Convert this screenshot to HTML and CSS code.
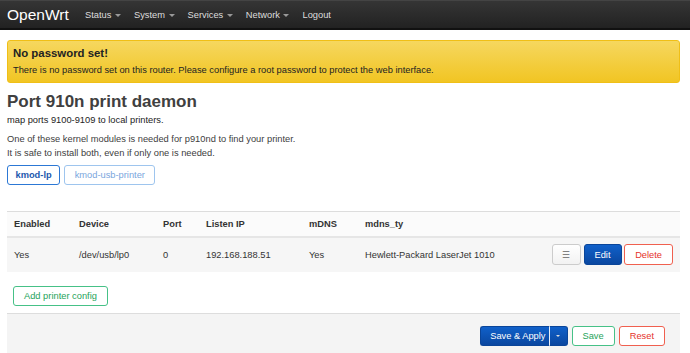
FILE: index.html
```html
<!DOCTYPE html>
<html>
<head>
	<title>p910nd - OpenWrt</title>
	<link rel="stylesheet" href="styles.css">
</head>
<body>
	<header class="navbar">
		<a class="brand" href="#">OpenWrt</a>
		<ul class="nav">
			<li>Status <span class="caret"></span></li>
			<li>System <span class="caret"></span></li>
			<li>Services <span class="caret"></span></li>
			<li>Network <span class="caret"></span></li>
			<li>Logout</li>
		</ul>
	</header>

	<div class="container">
		<div class="alert">
			<h4>No password set!</h4>
			<p>There is no password set on this router. Please configure a root password to protect the web interface.</p>
		</div>

		<h2 class="title">Port 910n print daemon</h2>
		<p class="desc">map ports 9100-9109 to local printers.</p>
		<p class="info">One of these kernel modules is needed for p910nd to find your printer.<br>It is safe to install both, even if only one is needed.</p>
		<div class="modules">
			<button class="btn btn-module">kmod-lp</button>
			<button class="btn btn-module disabled">kmod-usb-printer</button>
		</div>

		<table class="table">
			<tr class="head">
				<th class="c-en">Enabled</th>
				<th class="c-dev">Device</th>
				<th class="c-port">Port</th>
				<th class="c-ip">Listen IP</th>
				<th class="c-mdns">mDNS</th>
				<th>mdns_ty</th>
				<th></th>
			</tr>
			<tr class="row">
				<td>Yes</td>
				<td>/dev/usb/lp0</td>
				<td>0</td>
				<td>192.168.188.51</td>
				<td>Yes</td>
				<td>Hewlett-Packard LaserJet 1010</td>
				<td class="actions">
					<button class="btn btn-drag">&#9776;</button>
					<button class="btn btn-primary">Edit</button>
					<button class="btn btn-negative">Delete</button>
				</td>
			</tr>
		</table>

		<div class="add">
			<button class="btn btn-add">Add printer config</button>
		</div>

		<div class="page-actions">
			<div class="split">
				<button class="btn btn-primary btn-apply">Save &amp; Apply</button>
				<button class="btn btn-primary btn-dd"><span class="caret"></span></button>
			</div>
			<button class="btn btn-add">Save</button>
			<button class="btn btn-negative">Reset</button>
		</div>
	</div>
</body>
</html>
```

FILE: styles.css
```css
* {
  box-sizing: border-box;
  margin: 0;
  padding: 0;
}

body {
  font-family: "Liberation Sans", Arial, sans-serif;
  font-size: 9.3px;
  line-height: 14px;
  color: #404040;
  background: #fff;
}

.navbar {
  height: 30px;
  display: flex;
  align-items: center;
  background: linear-gradient(#353535, #222);
  border-top: 1px solid #444;
  border-bottom: 2px solid #111;
}

.brand {
  display: block;
  color: #fff;
  text-decoration: none;
  font-size: 15.5px;
  padding-left: 7px;
  width: 85px;
}

.nav {
  list-style: none;
  display: flex;
}

.nav li {
  color: #ddd;
  font-size: 9.3px;
  margin-right: 13px;
}

.caret {
  display: inline-block;
  width: 0;
  height: 0;
  vertical-align: middle;
  border-top: 3px solid #999;
  border-left: 3px solid transparent;
  border-right: 3px solid transparent;
  margin-left: 1px;
}

.container {
  padding: 0 10px 0 7px;
}

.alert {
  margin-top: 10px;
  height: 43px;
  padding: 5px 5px;
  background: linear-gradient(#f6d75f, #f1c523);
  border: 1px solid #f0bf16;
  border-radius: 3px;
  color: #222;
}

.alert h4 {
  font-size: 11.4px;
  line-height: 15px;
  margin-bottom: 2px;
}

.title {
  font-size: 17px;
  line-height: 22px;
  margin-top: 8px;
  color: #404040;
}

.desc {
  margin-top: 0;
  color: #222;
}

.info {
  margin-top: 5px;
}

.modules {
  margin-top: 5px;
  display: flex;
  gap: 4px;
}

.btn {
  font-family: inherit;
  font-size: 9.3px;
  height: 20px;
  padding: 0 10px;
  background: #fff;
  border: 1px solid #ccc;
  border-radius: 3px;
  color: #404040;
}

.btn-module {
  border-color: #2c78d5;
  color: #1c58ad;
  font-weight: bold;
  padding: 0 7.5px;
}

.btn-module.disabled {
  border-color: #9ec5ee;
  color: #7aa6dd;
  font-weight: normal;
  padding: 0 9.5px;
}

.table {
  width: 100%;
  margin-top: 26px;
  border-collapse: collapse;
  border-top: 1px solid #ddd;
}

.table th {
  text-align: left;
  padding: 0 7px;
  height: 25px;
  color: #333;
  background: #fbfbfb;
  border-bottom: 2px solid #e6e6e6;
}

.table td {
  padding: 0 7px;
  height: 35px;
  background: #f6f6f6;
  color: #333;
}

.c-en { width: 65px; }
.c-dev { width: 84px; }
.c-port { width: 43px; }
.c-ip { width: 103px; }
.c-mdns { width: 56px; }

.actions {
  text-align: right;
  white-space: nowrap;
}

.actions .btn {
  height: 21px;
}

.btn-drag {
  width: 29px;
  padding: 0;
  color: #666;
  background: linear-gradient(#fff, #f2f2f2);
}

.btn-primary {
  background: linear-gradient(#1060c9, #0a47a0);
  border-color: #0a4599;
  color: #fff;
}

.btn-negative {
  border-color: #f0604f;
  color: #e5322b;
}

.btn-add {
  border-color: #46c187;
  color: #26a35a;
}

.add {
  margin-top: 14px;
  padding-left: 6px;
}

.page-actions {
  margin-top: 7px;
  height: 45px;
  background: #f4f4f4;
  border-top: 1px solid #ddd;
  display: flex;
  justify-content: flex-end;
  align-items: flex-start;
  gap: 4px;
  padding-right: 15px;
  padding-top: 12px;
}

.split {
  display: flex;
}

.btn-apply {
  border-radius: 3px 0 0 3px;
  border-right: 1px solid #e8eef8;
  padding: 0 3px 0 9px;
}

.btn-dd {
  border-radius: 0 3px 3px 0;
  border-left: 0;
  width: 18px;
  padding: 0;
}

.btn-dd .caret {
  border-top-color: #ddd;
  border-width: 2px 2px 0;
  margin: 0;
}
```
